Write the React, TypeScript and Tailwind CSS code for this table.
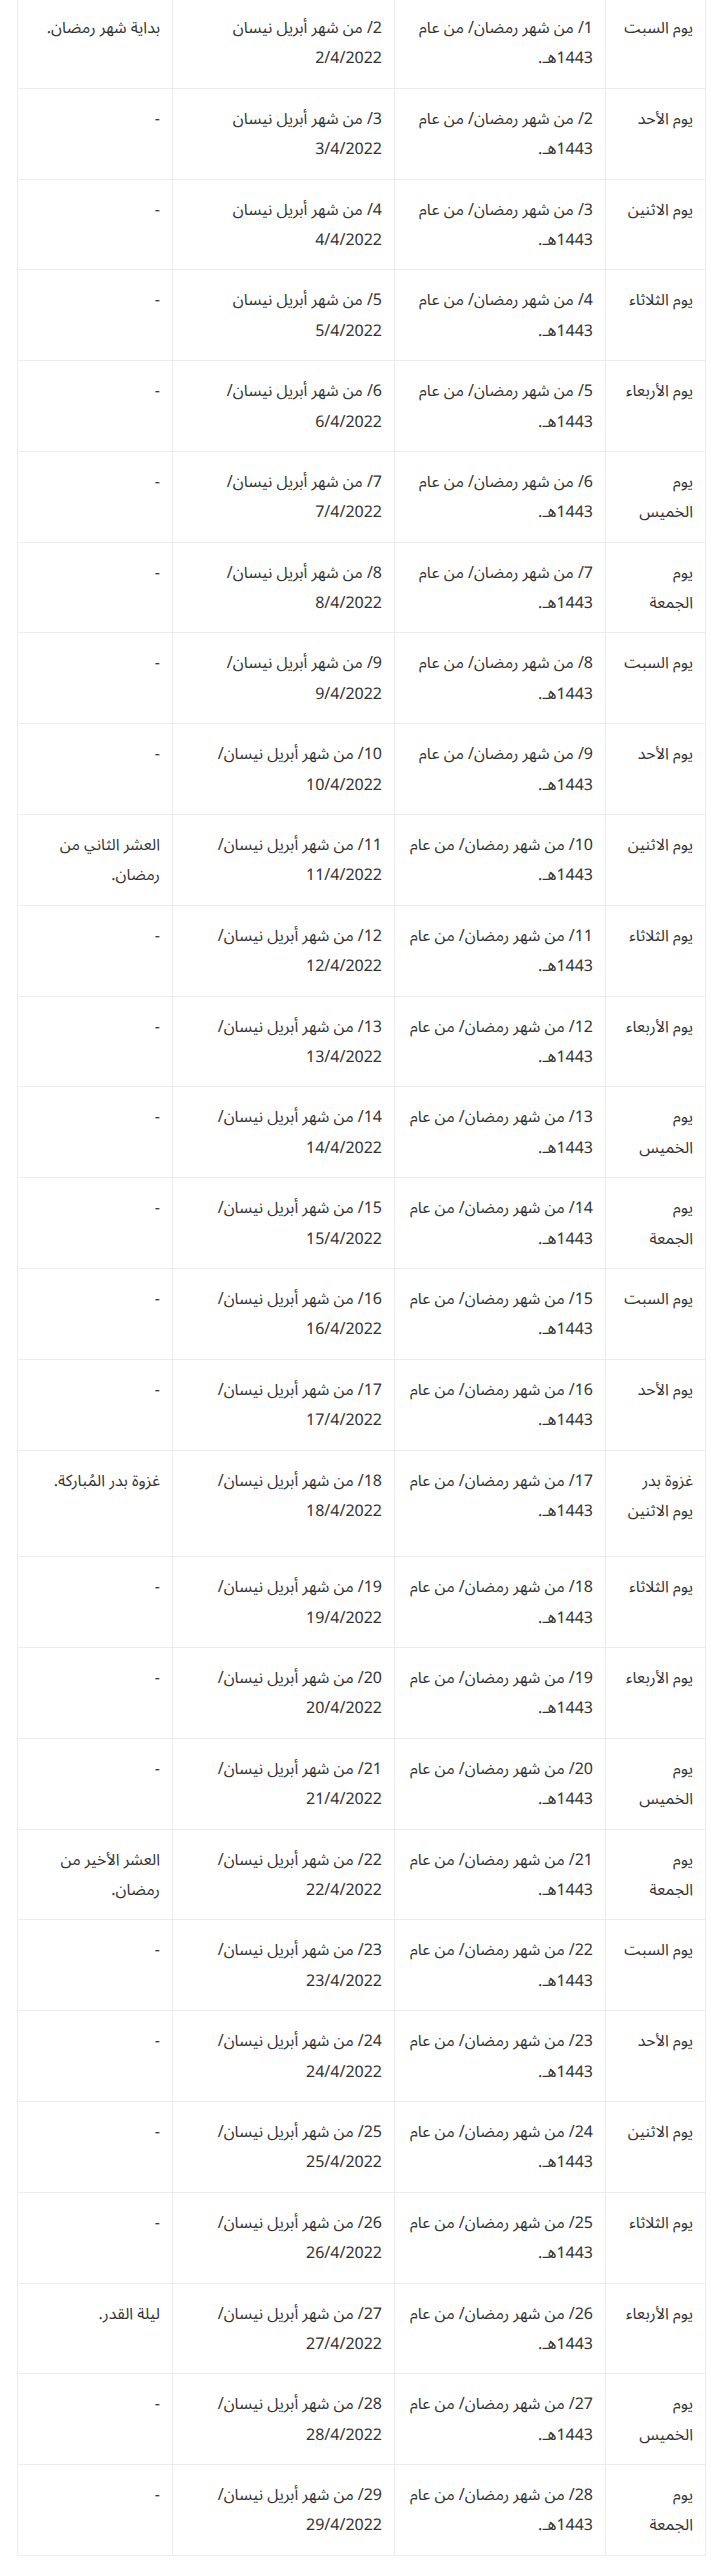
import React from "react";

type Row = { day: React.ReactNode; h: number; g: number; slash: boolean; note: React.ReactNode; tall: boolean };

const br = (a: string, b: string) => (
  <>
    {a}
    <br />
    {b}
  </>
);

const days: React.ReactNode[] = [
  "يوم السبت",
  "يوم الأحد",
  "يوم الاثنين",
  "يوم الثلاثاء",
  "يوم الأربعاء",
  br("يوم", "الخميس"),
  br("يوم", "الجمعة"),
  "يوم السبت",
  "يوم الأحد",
  "يوم الاثنين",
  "يوم الثلاثاء",
  "يوم الأربعاء",
  br("يوم", "الخميس"),
  br("يوم", "الجمعة"),
  "يوم السبت",
  "يوم الأحد",
  br("غزوة بدر", "يوم الاثنين"),
  "يوم الثلاثاء",
  "يوم الأربعاء",
  br("يوم", "الخميس"),
  br("يوم", "الجمعة"),
  "يوم السبت",
  "يوم الأحد",
  "يوم الاثنين",
  "يوم الثلاثاء",
  "يوم الأربعاء",
  br("يوم", "الخميس"),
  br("يوم", "الجمعة"),
];

const notes: Record<number, React.ReactNode> = {
  1: "بداية شهر رمضان.",
  10: br("العشر الثاني من", "رمضان."),
  17: "غزوة بدر المُباركة.",
  21: br("العشر الأخير من", "رمضان."),
  26: "ليلة القدر.",
};

const rows: Row[] = days.map((d, i) => {
  const n = i + 1;
  return {
    day: d,
    h: n,
    g: n + 1,
    slash: n >= 5,
    note: notes[n] ?? "-",
    tall: n === 17,
  };
});

const cell = "border border-[#ececec] align-top px-[12px] pt-[14px] whitespace-nowrap";

export default function App() {
  return (
    <div
      dir="rtl"
      className="h-[2560px] overflow-hidden bg-white pl-[18px] pr-[16px] font-['Noto_Sans_Arabic_UI','Noto_Sans_Arabic','DejaVu_Sans',sans-serif]"
    >
      <table className="-mt-[3px] w-[688px] table-fixed border-collapse text-[16px] leading-[1.9] text-[#333333]">
        <colgroup>
          <col className="w-[100px]" />
          <col className="w-[211px]" />
          <col className="w-[222px]" />
          <col className="w-[155px]" />
        </colgroup>
        <tbody>
          {rows.map((r) => (
            <tr key={r.h}>
              <td className={`${cell} ${r.tall ? "pb-[31px]" : "pb-[15px]"}`}>{r.day}</td>
              <td className={`${cell} pb-[15px]`}>
                {r.h}/ من شهر رمضان/ من عام
                <br />
                1443هـ.
              </td>
              <td className={`${cell} pb-[15px]`}>
                {r.g}/ من شهر أبريل نيسان{r.slash ? "/" : ""}
                <br />
                {r.g}/4/2022
              </td>
              <td className={`${cell} pb-[15px]`}>{r.note}</td>
            </tr>
          ))}
        </tbody>
      </table>
    </div>
  );
}
